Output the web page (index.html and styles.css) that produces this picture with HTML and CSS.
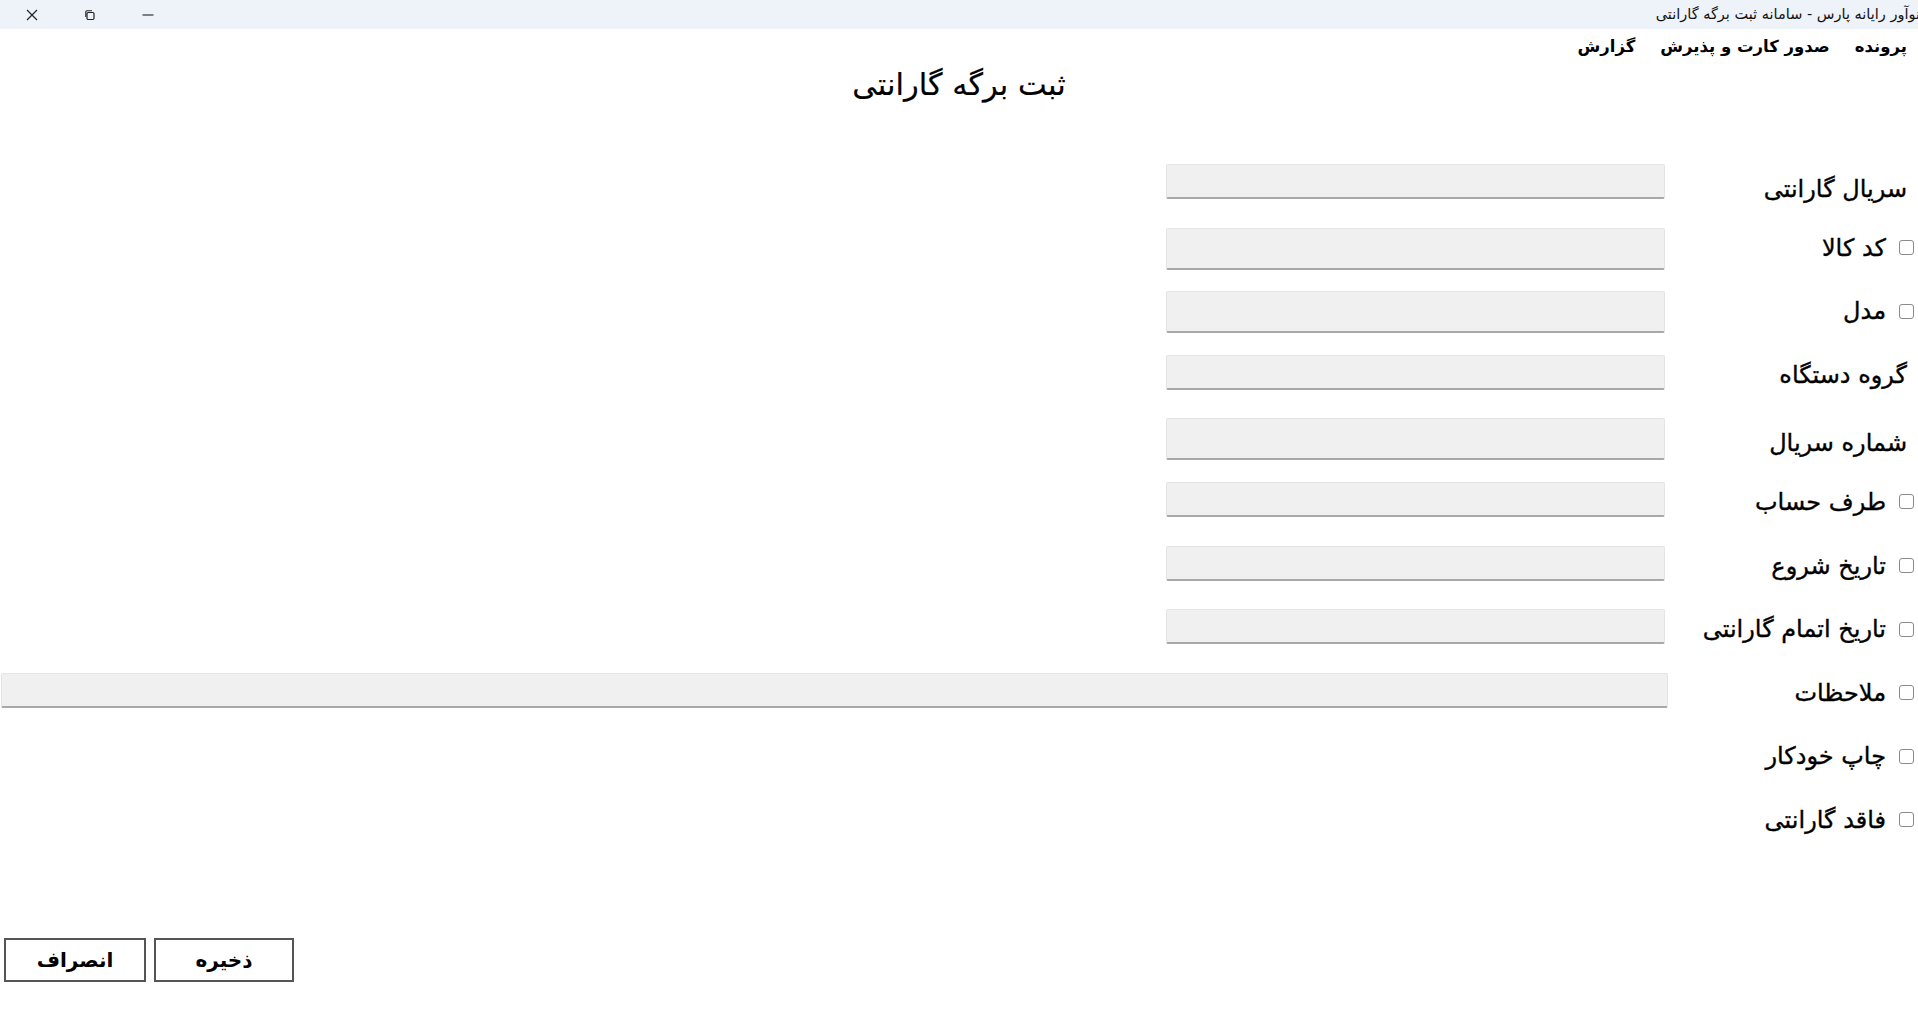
FILE: index.html
```html
<!DOCTYPE html>
<html lang="fa" dir="rtl">
<head>
<meta charset="utf-8">
<title>ثبت برگه گارانتی</title>
<link rel="stylesheet" href="styles.css">
</head>
<body>
<div class="titlebar">
  <div class="tb-text">نوآور رایانه پارس - سامانه ثبت برگه گارانتی</div>
  <div class="tb-controls">
    <span class="tb-btn"><svg width="12" height="12" viewBox="0 0 12 12"><path d="M1 1 L11 11 M11 1 L1 11" stroke="#222" stroke-width="1.2" fill="none"/></svg></span>
    <span class="tb-btn"><svg width="12" height="12" viewBox="0 0 12 12"><rect x="3" y="3.5" width="7" height="7" rx="1.2" stroke="#222" stroke-width="1.2" fill="none"/><path d="M1.8 8 V3 Q1.8 1.8 3 1.8 H8" stroke="#222" stroke-width="1.1" fill="none"/></svg></span>
    <span class="tb-btn"><svg width="12" height="12" viewBox="0 0 12 12"><path d="M0.5 6 H11.5" stroke="#222" stroke-width="1.1"/></svg></span>
  </div>
</div>

<nav class="menubar">
  <span class="menu-item">پرونده</span>
  <span class="menu-item">صدور کارت و پذیرش</span>
  <span class="menu-item">گزارش</span>
</nav>

<h1 class="page-title">ثبت برگه گارانتی</h1>

<form class="form">
  <div class="row">
    <div class="lbl lbl-low"><span class="txt plain">سریال گارانتی</span></div>
    <div class="field"><input class="inp" type="text"></div>
  </div>
  <div class="row">
    <div class="lbl"><input class="chk" type="checkbox"><span class="txt">کد کالا</span></div>
    <div class="field"><input class="inp tall" type="text"></div>
  </div>
  <div class="row">
    <div class="lbl"><input class="chk" type="checkbox"><span class="txt">مدل</span></div>
    <div class="field"><input class="inp tall" type="text"></div>
  </div>
  <div class="row">
    <div class="lbl"><span class="txt plain">گروه دستگاه</span></div>
    <div class="field"><input class="inp" type="text"></div>
  </div>
  <div class="row">
    <div class="lbl lbl-low"><span class="txt plain">شماره سریال</span></div>
    <div class="field"><input class="inp tall" type="text"></div>
  </div>
  <div class="row">
    <div class="lbl"><input class="chk" type="checkbox"><span class="txt">طرف حساب</span></div>
    <div class="field"><input class="inp" type="text"></div>
  </div>
  <div class="row">
    <div class="lbl"><input class="chk" type="checkbox"><span class="txt">تاریخ شروع</span></div>
    <div class="field"><input class="inp" type="text"></div>
  </div>
  <div class="row">
    <div class="lbl"><input class="chk" type="checkbox"><span class="txt">تاریخ اتمام گارانتی</span></div>
    <div class="field"><input class="inp" type="text"></div>
  </div>
  <div class="row">
    <div class="lbl"><input class="chk" type="checkbox"><span class="txt">ملاحظات</span></div>
    <div class="field wide"><input class="inp" type="text"></div>
  </div>
  <div class="row">
    <div class="lbl"><input class="chk" type="checkbox"><span class="txt">چاپ خودکار</span></div>
  </div>
  <div class="row">
    <div class="lbl"><input class="chk" type="checkbox"><span class="txt">فاقد گارانتی</span></div>
  </div>

  <div class="actions">
    <button type="button" class="btn btn-save">ذخیره</button>
    <button type="button" class="btn btn-cancel">انصراف</button>
  </div>
</form>
</body>
</html>
```

FILE: styles.css
```css
html, body {
  margin: 0;
  padding: 0;
  background: #ffffff;
}
body {
  direction: rtl;
  font-family: "DejaVu Sans", sans-serif;
  color: #000;
  width: 1918px;
  height: 1017px;
  overflow: hidden;
}

.titlebar {
  height: 29px;
  background: #eef2f9;
  display: flex;
  align-items: center;
  justify-content: space-between;
}
.tb-text {
  font-size: 14.5px;
  color: #111;
  white-space: nowrap;
  margin-right: -2px;
  line-height: 29px;
}
.tb-controls {
  display: flex;
  direction: ltr;
  height: 29px;
  align-items: center;
  padding-left: 26px;
  gap: 46px;
}
.tb-btn {
  width: 12px;
  height: 12px;
  display: flex;
}

.menubar {
  display: flex;
  gap: 25px;
  padding-top: 0;
  padding-right: 11px;
  height: 38px;
  line-height: 36px;
}
.menu-item {
  font-weight: bold;
  font-size: 16.5px;
  white-space: nowrap;
}

.page-title {
  margin: 0;
  text-align: center;
  font-weight: normal;
  font-size: 30.5px;
  line-height: 36px;
  height: 36px;
  -webkit-text-stroke: 0.2px #000;
}

.form {
  margin: 61px 0 0 0;
}
.row {
  display: flex;
  height: 63.6px;
  align-items: flex-start;
}
.lbl {
  width: 249px;
  flex: none;
  display: flex;
  align-items: center;
  height: 40px;
  box-sizing: border-box;
}
.lbl-low {
  margin-top: 5px;
}
.chk {
  appearance: none;
  -webkit-appearance: none;
  width: 15px;
  height: 15px;
  margin: 0 4px 0 0;
  border: 1px solid #8a8a8a;
  border-radius: 3px;
  background: #fff;
  box-sizing: border-box;
  flex: none;
}
.txt {
  font-size: 24px;
  margin-right: 13px;
  white-space: nowrap;
  -webkit-text-stroke: 0.35px #000;
}
.txt.plain {
  margin-right: 11px;
}

.field {
  width: 499px;
  margin-right: 4px;
  flex: none;
}
.field.wide {
  width: auto;
  flex: 1;
  margin-right: 1px;
  margin-left: 1px;
}
.inp {
  display: block;
  width: 100%;
  height: 35px;
  box-sizing: border-box;
  background: #f0f0f0;
  border: 1px solid #e4e4e4;
  border-bottom: 2px solid #a8a8a8;
  border-radius: 2px;
  margin: 0;
  padding: 0 4px;
  outline: none;
}
.inp.tall {
  height: 42px;
}

.actions {
  display: flex;
  justify-content: flex-end;
  gap: 8px;
  margin-top: 74px;
  padding-left: 4px;
}
.btn {
  height: 44px;
  background: #fff;
  border: 2px solid #555;
  border-radius: 0;
  font-family: "DejaVu Sans", sans-serif;
  font-weight: bold;
  font-size: 20px;
  color: #000;
  padding: 0;
  margin: 0;
}
.btn-save {
  width: 140px;
}
.btn-cancel {
  width: 142px;
}
```
